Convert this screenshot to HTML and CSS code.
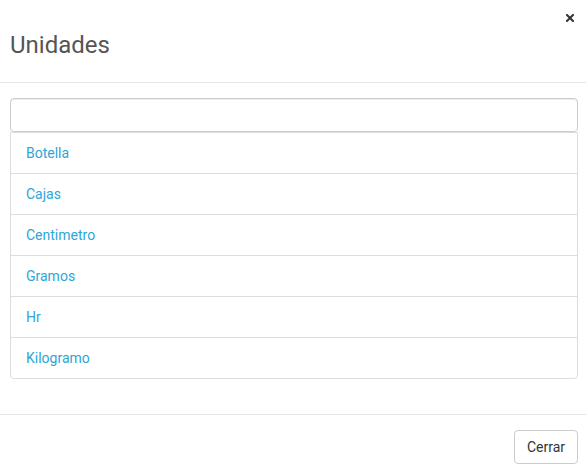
FILE: index.html
```html
<!DOCTYPE html>
<html lang="es">
<head>
<meta charset="utf-8">
<title>Unidades</title>
<link rel="stylesheet" href="styles.css">
</head>
<body>
<div class="modal">
  <div class="modal-header">
    <button class="close" type="button" aria-label="Cerrar">
      <svg width="8" height="8" viewBox="0 0 8 8"><path d="M1 1L7 7M7 1L1 7" stroke="#333" stroke-width="2" stroke-linecap="square"/></svg>
    </button>
    <h4 class="modal-title">Unidades</h4>
  </div>
  <div class="modal-body">
    <input class="search" type="text">
    <ul class="list-group">
      <li class="list-item"><a href="#">Botella</a></li>
      <li class="list-item"><a href="#">Cajas</a></li>
      <li class="list-item"><a href="#">Centimetro</a></li>
      <li class="list-item"><a href="#">Gramos</a></li>
      <li class="list-item"><a href="#">Hr</a></li>
      <li class="list-item"><a href="#">Kilogramo</a></li>
    </ul>
  </div>
  <div class="modal-footer">
    <button class="btn" type="button">Cerrar</button>
  </div>
</div>
</body>
</html>
```
FILE: styles.css
```css
* { box-sizing: border-box; }
html, body { margin: 0; padding: 0; background: #fff; }
body { font-family: Roboto, "Liberation Sans", sans-serif; font-size: 14px; color: #333; }
.modal { width: 586px; }
.modal-header {
  display: flex;
  flex-direction: column;
  padding: 10px 8px 24px 10px;
  border-bottom: 1px solid #e5e5e5;
}
.close {
  align-self: flex-end;
  width: 14px;
  height: 14px;
  padding: 0;
  margin: 0;
  border: 0;
  background: none;
  display: flex;
  align-items: center;
  justify-content: center;
  transform: translate(-1px, 1px);
}
.modal-title {
  margin: 8px 0 0 0;
  font-size: 24px;
  line-height: 26px;
  font-weight: 400;
  color: #555;
}
.modal-body { padding: 15px 8px 35px 10px; }
.search {
  display: block;
  width: 100%;
  height: 34px;
  margin: 0;
  padding: 6px 12px;
  border: 1px solid #ccc;
  border-radius: 4px;
  box-shadow: inset 0 1px 1px rgba(0,0,0,.075);
  font: inherit;
}
.list-group {
  list-style: none;
  margin: 0;
  padding: 0;
  border: 1px solid #ddd;
  border-radius: 0 0 4px 4px;
}
.list-item {
  padding: 10px 15px;
  line-height: 20px;
  border-top: 1px solid #ddd;
}
.list-item:first-child { border-top: 0; }
.list-item a { color: #2ea5d8; text-decoration: none; }
.modal-footer {
  display: flex;
  justify-content: flex-end;
  padding: 15px 8px 9px 10px;
  border-top: 1px solid #e5e5e5;
}
.btn {
  height: 34px;
  padding: 6px 12px;
  border: 1px solid #ccc;
  border-radius: 4px;
  background: #fff;
  color: #333;
  font: inherit;
  line-height: 20px;
}
```
